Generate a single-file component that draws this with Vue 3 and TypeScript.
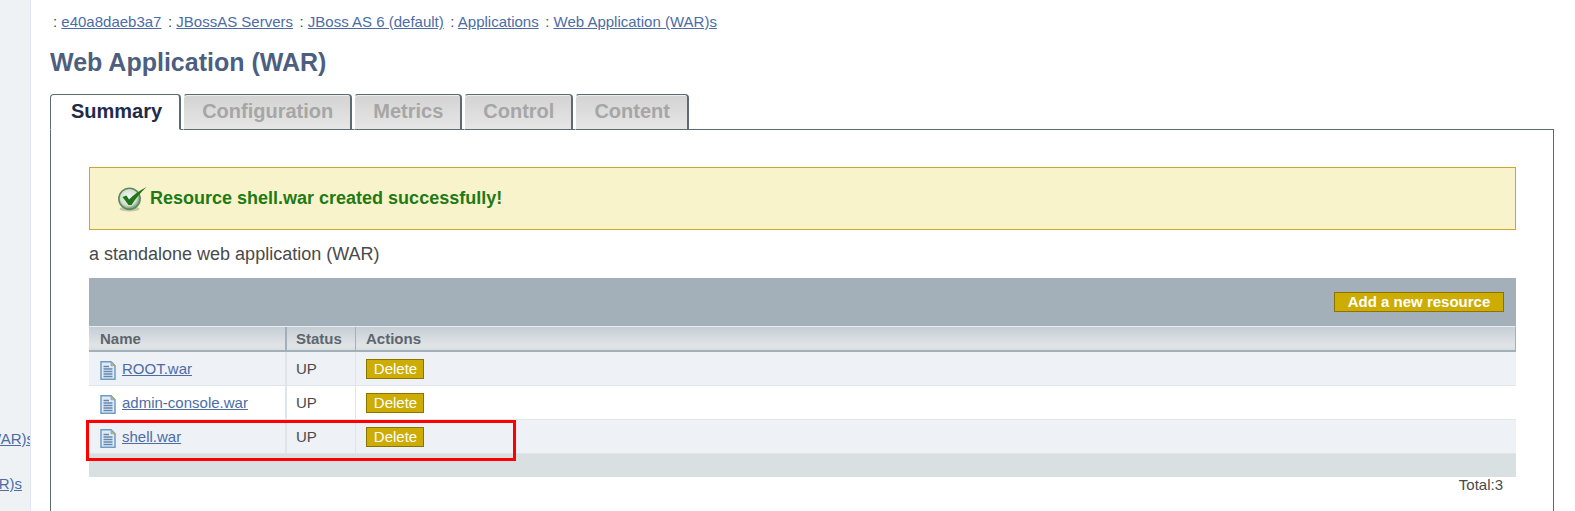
<script setup lang="ts">
interface Row { name: string }
const crumbs: string[] = ['e40a8daeb3a7', 'JBossAS Servers', 'JBoss AS 6 (default)', 'Applications', 'Web Application (WAR)s']
const tabs: string[] = ['Summary', 'Configuration', 'Metrics', 'Control', 'Content']
const rows: Row[] = [{ name: 'ROOT.war' }, { name: 'admin-console.war' }, { name: 'shell.war' }]
</script>

<template>
  <div class="page">
    <aside class="side">
      <a class="side-link first" href="#">Web Application (WAR)s</a>
      <a class="side-link second" href="#">Web Application (WAR)s</a>
    </aside>
    <main class="main">
      <nav class="crumbs">
        <span v-for="c in crumbs" :key="c" class="crumb">: <a href="#">{{ c }}</a></span>
      </nav>
      <h1 class="title">Web Application (WAR)</h1>
      <div class="tabs">
        <div v-for="(t, i) in tabs" :key="t" class="tab" :class="{ active: i === 0 }">{{ t }}</div>
      </div>
      <section class="panel">
        <div class="message">
          <svg class="check" width="30" height="26" viewBox="0 0 30 26">
            <defs>
              <radialGradient id="ball" cx="45%" cy="42%" r="58%">
                <stop offset="0" stop-color="#f6f9f2" />
                <stop offset="0.68" stop-color="#d3dfce" />
                <stop offset="1" stop-color="#5f9264" />
              </radialGradient>
            </defs>
            <ellipse cx="12.5" cy="23" rx="10" ry="2.6" fill="#8f9f80" opacity="0.5" />
            <circle cx="12.5" cy="12.8" r="10.6" fill="url(#ball)" stroke="#5c8a60" stroke-width="1.6" />
            <path d="M5.5 11 L9.5 9.5 L12 13.5 C17 8.5 22.5 4.5 29.5 1 C23.5 6.5 18.5 12.5 14.5 19 L11.5 19 Z" fill="#1f7517" />
          </svg>
          <span>Resource shell.war created successfully!</span>
        </div>
        <p class="desc">a standalone web application (WAR)</p>
        <div class="toolbar"><button class="add" type="button">Add a new resource</button></div>
        <div class="thead">
          <div class="c-name">Name</div>
          <div class="c-status">Status</div>
          <div class="c-actions">Actions</div>
        </div>
        <div class="rows">
          <div v-for="r in rows" :key="r.name" class="row">
            <div class="c-name">
              <svg class="doc" width="16" height="19" viewBox="0 0 16 19">
                <path d="M1 .8 H11 L15 4.8 V18.2 H1 Z" fill="#e1ebf6" stroke="#6f9cc6" stroke-width="1.5" />
                <path d="M11 .8 V4.8 H15 Z" fill="#d8b530" stroke="#7fa3c6" stroke-width=".8" />
                <path d="M3.5 5.5 H9 M3.5 8 H12.5 M3.5 10.5 H12.5 M3.5 13 H12.5 M3.5 15.5 H12.5" stroke="#6488ad" stroke-width="1.3" fill="none" />
              </svg>
              <a href="#">{{ r.name }}</a>
            </div>
            <div class="c-status">UP</div>
            <div class="c-actions"><button class="del" type="button">Delete</button></div>
          </div>
          <div class="highlight"></div>
        </div>
        <div class="band"></div>
        <div class="total">Total:3</div>
      </section>
    </main>
  </div>
</template>

<style>
html, body { margin: 0; height: 511px; overflow: hidden; background: #fff; }
</style>

<style scoped>
.page {
  display: flex;
  height: 511px;
  overflow: hidden;
  font-family: "Liberation Sans", Arial, sans-serif;
  color: #4a4a4a;
  font-size: 15px;
}
a { color: #4c6ca6; text-decoration: underline; }
.side {
  width: 30px;
  flex: none;
  background: #eef2f5;
  border-right: 1px solid #e0e6ee;
  overflow: hidden;
  display: flex;
  flex-direction: column;
  align-items: flex-end;
  padding-top: 430px;
}
.side-link { white-space: nowrap; line-height: 17px; }
.side-link.first { margin-right: -4px; }
.side-link.second { margin-right: 8px; margin-top: 28px; }
.main { flex: 1; min-width: 0; padding: 13px 21px 0 19px; }
.crumbs { height: 18px; line-height: 18px; padding-left: 3px; white-space: nowrap; }
.crumb { margin-right: 6.5px; }
.title {
  margin: 16px 0 0;
  font-size: 25px;
  line-height: 31px;
  font-weight: bold;
  color: #4d5f80;
}
.tabs { display: flex; gap: 2px; margin-top: 16px; height: 36px; position: relative; z-index: 1; }
.tab {
  box-sizing: border-box;
  height: 36px;
  padding: 4px 17px 0 18px;
  font-size: 20px;
  font-weight: bold;
  line-height: 24px;
  color: #a6a6a6;
  background: linear-gradient(#d3d3d3, #e6e6e6);
  border-top: 1px solid #5c6a72;
  border-right: 2px solid #5c6a72;
  border-bottom: 1px solid #5c6a72;
  border-left: 1px solid #fff;
  border-radius: 4px 4px 0 0;
  box-shadow: inset 0 1px 0 #eee;
}
.tab.active {
  color: #1f2b4b;
  background: #fff;
  border-left: 1px solid #5c6a72;
  border-bottom: 1px solid #fff;
  padding-left: 20px;
  box-shadow: none;
}
.panel {
  margin-top: -1px;
  height: 400px;
  box-sizing: border-box;
  border: 1px solid #5c6a72;
  padding: 37px 37px 0 38px;
  background: #fff;
}
.message {
  box-sizing: border-box;
  height: 63px;
  display: flex;
  align-items: center;
  gap: 3px;
  padding-left: 27px;
  background: #f9f3cc;
  border: 1px solid #c9a927;
  color: #1f7a15;
  font-size: 18px;
  font-weight: bold;
}
.check { flex: none; }
.desc { margin: 14px 0 0; height: 21px; line-height: 21px; font-size: 18px; }
.toolbar {
  margin-top: 13px;
  height: 48px;
  background: #a4b0b9;
  display: flex;
  align-items: center;
  justify-content: flex-end;
  padding-right: 12px;
}
.add, .del {
  font-family: inherit;
  color: #fff;
  background: #cdac03;
  border: 1px solid #8a7300;
  padding: 0;
  box-sizing: border-box;
}
.add { width: 170px; height: 20px; font-size: 15px; font-weight: bold; margin-top: -1px; }
.del { width: 58px; height: 20px; font-size: 15px; padding-left: 1px; }
.thead {
  display: flex;
  box-sizing: border-box;
  height: 26px;
  align-items: stretch;
  background: linear-gradient(#c6ced5 0, #e0e4e7 80%, #d9dee0 100%);
  border-top: 1px solid #e6ecf0;
  border-bottom: 2px solid #a4b0b9;
  border-right: 1px solid #a4b0b9;
  font-weight: bold;
  color: #5d666c;
  line-height: 23px;
}
.c-name { width: 197px; flex: none; box-sizing: border-box; padding-left: 11px; display: flex; align-items: center; gap: 6px; }
.c-status { width: 69px; flex: none; box-sizing: border-box; padding-left: 9px; display: flex; align-items: center; }
.c-actions { flex: 1; padding-left: 10px; display: flex; align-items: center; }
.thead .c-name { border-right: 2px solid #a4b0b9; width: 198px; }
.thead .c-status { border-right: 1px solid #a4b0b9; width: 69px; }
.rows { position: relative; }
.row { display: flex; height: 34px; background: #fff; border-bottom: 1px solid #e0e5e9; box-sizing: border-box; }
.row:nth-child(odd) { background: #eef1f6; }
.row .c-name { border-right: 2px solid #e0e5e9; width: 198px; }
.row .c-status { border-right: 1px solid #e0e5e9; }
.doc { flex: none; margin-top: 3px; }
.highlight {
  position: absolute;
  left: -3px;
  top: 68px;
  width: 430px;
  height: 41px;
  box-sizing: border-box;
  border: 3px solid #ff0000;
}
.band { height: 24px; margin-top: -1px; background: #d8e0e2; }
.total { text-align: right; padding-right: 13px; line-height: 17px; margin-top: -1px; }
</style>
